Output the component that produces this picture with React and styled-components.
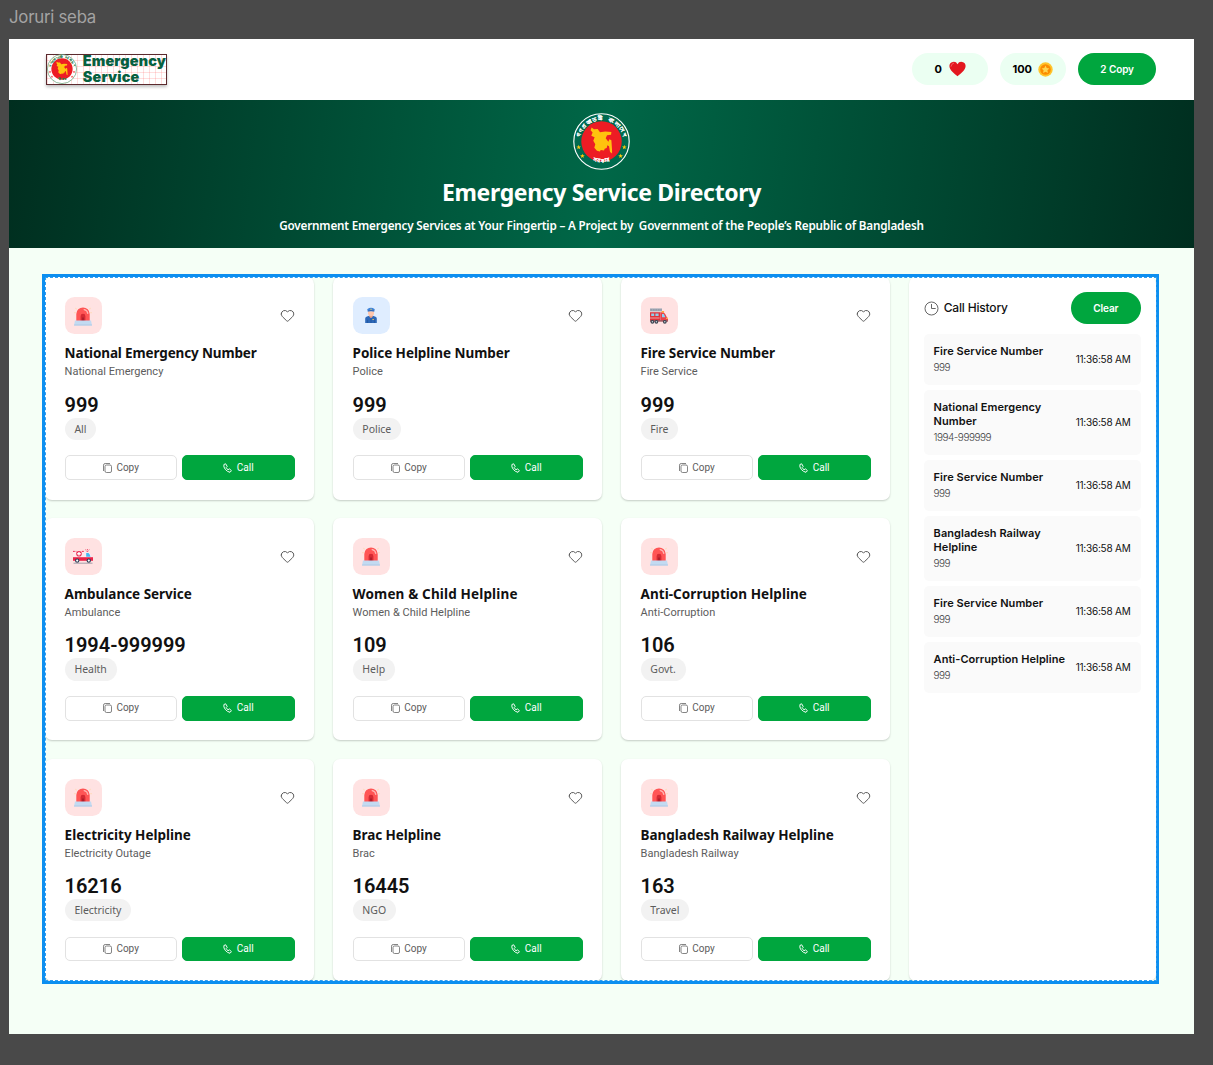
import React from "react";
import styled, { createGlobalStyle } from "styled-components";
import { Heart } from "lucide-react";

const hind = '"Noto Sans", "Open Sans", sans-serif';
const inter = "Inter, sans-serif";
const green = "#00a63e";

const GlobalStyle = createGlobalStyle`
  *, *::before, *::after { box-sizing: border-box; }
  body { margin: 0; background: #494949; font-family: Roboto, sans-serif; color: #111; overflow: hidden; }
  h1, h2, p { margin: 0; }
  svg { display: block; flex: none; overflow: visible; }
  button { font: inherit; cursor: pointer; }
`;

const Canvas = styled.div`
  height: 1065px;
  padding: 5.6px 19px 31px 9px;
  display: flex;
  flex-direction: column;
  background: #494949;
`;

const FrameLabel = styled.div`
  height: 33px;
  padding: 1.4px 0 0 0;
  flex: none;
  font: 400 16.8px/20px ${inter};
  letter-spacing: -0.25px;
  color: #a3a3a3;
`;

const Frame = styled.div`
  flex: 1;
  display: flex;
  flex-direction: column;
  background: #f5fff6;
`;

const Header = styled.header`
  height: 61.4px;
  flex: none;
  padding: 0 37.6px 0 36.8px;
  display: flex;
  align-items: center;
  justify-content: space-between;
  background: #fff;
`;

const Logo = styled.div`
  width: 121.2px;
  height: 31px;
  display: flex;
  align-items: center;
  gap: 6px;
  border: 1px solid #5b2a2e;
  box-shadow: 0 2px 3px rgba(0, 0, 0, 0.25);
  background:
    repeating-linear-gradient(90deg, rgba(255, 90, 90, 0.2) 0 1px, transparent 1px 6px),
    repeating-linear-gradient(180deg, transparent 0 5px, rgba(255, 90, 90, 0.2) 5px 6px),
    #fff;
`;

const LogoText = styled.div`
  font: 900 14.4px/16px ${inter};
  letter-spacing: 0.15px;
  color: #07603f;
`;

const HeaderActions = styled.div`
  display: flex;
  gap: 12.2px;
`;

const Counter = styled.div`
  width: ${(p) => p.$width}px;
  height: 32px;
  border-radius: 16px;
  display: flex;
  align-items: center;
  justify-content: center;
  gap: 6.5px;
  background: #ebfff2;
  font: 700 11px/1 ${inter};
  color: #000;
`;

const PillButton = styled.button`
  width: ${(p) => p.$width}px;
  height: 32.2px;
  padding: 0;
  border: 0;
  border-radius: 17px;
  background: ${green};
  color: #fff;
  font: 600 10px/1 ${inter};
  letter-spacing: -0.1px;
`;

const Hero = styled.section`
  height: 147.6px;
  flex: none;
  padding-top: 13px;
  display: flex;
  flex-direction: column;
  align-items: center;
  color: #fff;
  background: linear-gradient(97deg, #002e1f 0%, #006747 50%, #002e1f 100%);
`;

const HeroTitle = styled.h1`
  margin-top: 7.3px;
  font: 700 23px/30px ${hind};
  letter-spacing: -0.35px;
`;

const HeroText = styled.p`
  margin-top: 8.6px;
  font: 600 11.7px/18px ${hind};
  letter-spacing: -0.185px;
  white-space: pre;
`;

const Main = styled.main`
  padding: 29.9px 38px 0 36px;
`;

const Selection = styled.div`
  position: relative;
  display: grid;
  grid-template-columns: 845.3px 247px;
  gap: 18.6px;
  height: 703.5px;
  outline: 3px solid #0c8ff0;

  &::after {
    content: "";
    position: absolute;
    inset: -0.5px;
    border: 1px dashed #2f9df2;
    pointer-events: none;
  }
`;

const Cards = styled.div`
  display: grid;
  grid-template-columns: repeat(3, 1fr);
  grid-template-rows: repeat(3, 1fr);
  gap: 18.6px;
`;

const Card = styled.article`
  padding: 19.7px 19.6px;
  display: flex;
  flex-direction: column;
  border-radius: 7px;
  background: #fff;
  box-shadow: 0 1px 2px rgba(0, 0, 0, 0.2);
`;

const CardTop = styled.div`
  display: flex;
  align-items: center;
  justify-content: space-between;
`;

const IconTile = styled.div`
  width: 37px;
  height: 37px;
  border-radius: 9.5px;
  display: grid;
  place-items: center;
  background: ${(p) => (p.$blue ? "#dfedff" : "#ffe2e2")};
`;

const FavButton = styled.button`
  padding: 0;
  border: 0;
  background: none;
  color: #4f4f4f;
`;

const CardTitle = styled.h2`
  margin-top: 10px;
  font: 700 13.5px/19px ${hind};
  letter-spacing: ${(p) => p.$tracking}px;
  white-space: nowrap;
  color: #111;
`;

const CardSubtitle = styled.p`
  font: 400 11px/17px Roboto, sans-serif;
  letter-spacing: 0.03px;
  color: #5c5c5c;
`;

const CardNumber = styled.p`
  margin-top: 12.6px;
  font: 600 20px/24px Roboto, sans-serif;
  letter-spacing: -0.04px;
  color: #111;
`;

const Tag = styled.span`
  align-self: flex-start;
  margin-top: 0.8px;
  padding: 0 9.8px;
  border-radius: 12px;
  background: #f2f2f2;
  font: 400 10.5px/22.4px ${hind};
  letter-spacing: -0.03px;
  color: #5c5c5c;
`;

const CardActions = styled.div`
  margin-top: auto;
  display: grid;
  grid-template-columns: 1fr 1fr;
  gap: 5px;
`;

const ActionButton = styled.button`
  height: 24.7px;
  padding: 0;
  display: flex;
  align-items: center;
  justify-content: center;
  gap: 4.5px;
  border: 1px solid ${(p) => (p.$primary ? green : "#e2e2e2")};
  border-radius: 5px;
  background: ${(p) => (p.$primary ? green : "#fff")};
  color: ${(p) => (p.$primary ? "#fff" : "#5c5c5c")};
  font: 400 10px/1 Roboto, sans-serif;
`;

const History = styled.aside`
  padding: 14.8px;
  background: #fff;
  border-radius: 7px;
  box-shadow: 0 1px 2px rgba(0, 0, 0, 0.14);
`;

const HistoryHead = styled.div`
  display: flex;
  align-items: center;
  justify-content: space-between;
  margin-bottom: 9.8px;
`;

const HistoryTitle = styled.div`
  display: flex;
  align-items: center;
  gap: 5px;
  font: 500 12px/16px ${inter};
  letter-spacing: -0.18px;
`;

const HistoryList = styled.div`
  display: flex;
  flex-direction: column;
  gap: 5.2px;
`;

const HistoryItem = styled.div`
  min-height: 50.8px;
  padding: 9.9px;
  display: flex;
  align-items: center;
  justify-content: space-between;
  border-radius: 5px;
  background: #fafafa;
`;

const HistoryName = styled.div`
  max-width: 134px;
  font: 600 11px/14px ${inter};
  letter-spacing: 0.05px;
  color: #111;
`;

const HistoryNumber = styled.div`
  margin: 2.2px 0 0.8px;
  font: 300 10px/14px ${inter};
  letter-spacing: -0.5px;
  color: #444;
`;

const HistoryTime = styled.div`
  flex: none;
  margin: -1px 0.7px 0 0;
  font: 400 10px/14px ${inter};
  letter-spacing: -0.22px;
  color: #111;
`;

function Emblem({ id, size, light }) {
  const ink = light ? "#2f7d46" : "#fff";
  const star = light ? "#ef2b2d" : "#ffc90e";
  return (
    <svg width={size} height={size} viewBox="0 0 100 100">
      <defs>
        <path id={`${id}-top`} d="M12.5 55 A37.8 37.8 0 1 1 87.5 55" />
        <path id={`${id}-bottom`} d="M20 75 A43 43 0 0 0 80 75" />
      </defs>
      <circle cx="50" cy="50" r="48.6" fill={light ? "#fff" : "#006a4e"} stroke={ink} strokeWidth={light ? 1.8 : 2} />
      <circle cx="50" cy="50" r="35.5" fill="#ed1c24" />
      <g fill={ink} stroke={ink} strokeWidth="0.15" fontFamily="sans-serif" fontSize="9.4" fontWeight="600" wordSpacing="2">
        <text>
          <textPath href={`#${id}-top`} startOffset="50%" textAnchor="middle" textLength="102">
            গণপ্রজাতন্ত্রী বাংলাদেশ
          </textPath>
        </text>
        <text>
          <textPath href={`#${id}-bottom`} startOffset="50%" textAnchor="middle" textLength="30">
            সরকার
          </textPath>
        </text>
      </g>
      {[[10, 60], [16.5, 75.5], [90, 60], [83.5, 75.5]].map(([x, y]) => (
        <path
          key={`${x}-${y}`}
          transform={`translate(${x} ${y})`}
          fill={star}
          d="M0-4.2 1.1-1.3 4.1-1.2 1.7.6 2.5 3.5 0 1.8-2.5 3.5-1.7.6-4.1-1.2-1.1-1.3Z"
        />
      ))}
      <path
        transform="translate(50 50) scale(.588) translate(-184.5 -124.5)"
        fill="#ffc20e"
        d="M155 83 162 88 173 87 180 97 196 95 214 96 213 104 201 106 197 115 205 125 208 118 214 121 216 150 216 160 210 156 207 139 202 136 200 144 194 146 192 151 182 150 180 154 171 152 163 143 166 133 160 122 164 112 154 107 158 98 152 91Z"
      />
    </svg>
  );
}

const Siren = () => (
  <svg width="20" height="20" viewBox="0 0 20 20">
    <path d="M3.8 3.2 2.2 2M16.2 3.2 17.8 2M2.9 6.6H1M17.1 6.6H19" stroke="#ffdcc4" strokeWidth="1.2" />
    <path d="M3.3 15.2V8.1a6.7 6.7 0 0 1 13.4 0v7.1Z" fill="#ff5555" />
    <path d="M7.6 15.2v-5a2.4 2.4 0 0 1 4.8 0v5Z" fill="#d42a33" />
    <path d="M9.2 15.2v-3.8h1.6v3.8Z" fill="#a81d2b" />
    <path d="M11.2 3.6c2 .4 3.3 1.8 3.6 3.8" fill="none" stroke="#ffb8b4" strokeWidth="1.3" strokeLinecap="round" />
    <path d="M2 14.4h16l1 5H1Z" fill="#c3daf1" />
    <path d="M1 18.6h18v.8H1Z" fill="#aac6e4" />
  </svg>
);

const Officer = () => (
  <svg width="14" height="17" viewBox="0 0 14 17">
    <path d="M1.2 16V11.4q0-1.7 1.8-2l2.2-.6h3.6l2.2.6q1.8.3 1.8 2V16Z" fill="#2d68b8" />
    <path d="M5.2 7.4h3.6v2.2L7 11.2 5.2 9.6Z" fill="#e9a58c" />
    <path d="M4 4.2h6v2q0 2.7-3 2.7T4 6.2Z" fill="#ffc6ad" />
    <path d="M3.2 2.2Q7-.5 10.8 2.2L10.2 4.2H3.8Z" fill="#3f83d8" />
    <path d="M3.7 3.8q3.3-1 6.6 0v.7q-3.3-.8-6.6 0Z" fill="#2c5da6" />
    <path d="M6.6 1.8h.9v1.1h-.9Z" fill="#ffd24a" />
    <path d="M7 11.2V16M3.6 12.7V16M10.4 12.7V16" stroke="#1e4d94" strokeWidth=".6" />
    <path d="M8.5 12h1.3v1H8.5Z" fill="#ffd24a" />
  </svg>
);

const FireTruck = () => (
  <svg width="20" height="18" viewBox="0 0 20 18">
    <path d="M1 1.4h12v3H1Z" fill="#a3abb8" />
    <path d="M1.5 2.9h11" stroke="#7d8797" strokeWidth=".7" strokeDasharray="1.6 .9" />
    <path d="M1 5.2h10.4v9H1Z" fill="#df333b" />
    <path d="M11.4 5.2h3.2q1.8 1.4 3.4 5.2l1 .6v3.2h-7.6Z" fill="#e8434a" />
    <path d="M12.7 4h2.4v1.5h-2.4Z" fill="#ffac33" />
    <path d="M13 7h1.8l1.5 3.2H13Z" fill="#86d3f5" />
    <path d="M2.2 6.5h3v2.6h-3ZM6.4 6.5h3.2v2.6H6.4Z" fill="#8fcdea" />
    <path d="M1 10.6h9.6v.8H1Z" fill="#f6b8bb" />
    <path d="M1 13.2h18v1.4H1Z" fill="#9a5a63" />
    <path d="M17.3 10.8h1.5v1.3h-1.5Z" fill="#ffd34d" />
    {[3.4, 7.4, 15.8].map((x) => (
      <g key={x}>
        <circle cx={x} cy="14.8" r="1.9" fill="#39424f" />
        <circle cx={x} cy="14.8" r=".8" fill="#c9d3dc" />
      </g>
    ))}
  </svg>
);

const Ambulance = () => (
  <svg width="22" height="18" viewBox="0 0 22 18">
    <path d="M1 4.2h12.3V12H1Z" fill="#ffe9ec" />
    <path d="M1 4.4h1.8M3.6 4.4h.8M9.8 4.4h2" stroke="#eb2d53" strokeWidth="1" />
    <path d="M13.2 5.6h3q2.6 1 3.2 4.2l1 .7V12h-7.2Z" fill="#f7eff6" />
    <path d="M14.2 6.1h2.3q1.4 1 2 3.7h-4.3Z" fill="#45b9f2" />
    <path d="M14.6 4.4h1.6M15.4 2v1.2M13.4 2.7l.8.6M17.4 2.7l-.8.6" stroke="#eb2d53" strokeWidth=".8" />
    <path d="M1 10.2h20v3.6H1Z" fill="#eb2348" />
    <circle cx="7" cy="6.8" r="2.8" fill="#eb2d53" />
    <path d="M6.3 5h1.4v1.1h1.1v1.4H7.7v1.1H6.3V7.5H5.2V6.1h1.1Z" fill="#fff" />
    {[5.2, 16.8].map((x) => (
      <g key={x}>
        <circle cx={x} cy="13.6" r="2.2" fill="#2d4058" />
        <circle cx={x} cy="13.6" r="1.1" fill="#fff" />
      </g>
    ))}
    <path d="M1.5 16.2h19" stroke="#687184" strokeWidth=".6" />
  </svg>
);

const RedHeart = () => (
  <svg width="17" height="16" viewBox="0 0 17 16">
    <path d="M8.5 15.2C5.6 12.8.4 9.3.4 5A4.3 4.3 0 0 1 8.5 3.2 4.3 4.3 0 0 1 16.6 5c0 4.3-5.2 7.8-8.1 10.2Z" fill="#e3171f" />
    <path d="M2 5.3q.3-2.7 2.7-3.2" fill="none" stroke="#f56065" strokeWidth=".9" strokeLinecap="round" />
  </svg>
);

const Coin = () => (
  <svg width="15" height="15" viewBox="0 0 15 15">
    <circle cx="7.5" cy="7.5" r="7.2" fill="#ffc42b" />
    <circle cx="7.5" cy="7.5" r="5.3" fill="#fb8c00" />
    <path d="M7.5 3.6 8.7 6l2.7.4-2 1.9.5 2.7-2.4-1.3L5.1 11l.5-2.7-2-1.9L6.3 6Z" fill="#ffd54f" />
  </svg>
);

const Clock = () => (
  <svg width="15" height="15" viewBox="0 0 15 15" fill="none" stroke="#555" strokeWidth=".9">
    <circle cx="7.5" cy="7.5" r="6.5" />
    <path d="M7.5 3v4.5h4.2" />
  </svg>
);

const CopyIcon = () => (
  <svg width="9" height="10" viewBox="0 0 9 10" fill="none" stroke="currentColor" strokeWidth=".75">
    <rect x="2" y="2" width="6.5" height="7.5" rx="1.5" />
    <path d="M.5 7.6V2.2Q.5.5 2.2.5h4.4" strokeLinecap="round" />
  </svg>
);

const PhoneIcon = () => (
  <svg width="9" height="10" viewBox="0 0 9 10" fill="none" stroke="currentColor" strokeWidth=".95" strokeLinejoin="round">
    <path d="M2.7.8.9 1.5Q.3 4 2.3 6.4T7 9.3l1.4-1.7-1.9-1.7-1.5.8Q3.6 5.8 3.2 4.5l1-1Z" />
  </svg>
);

const tileIcons = { siren: Siren, officer: Officer, truck: FireTruck, ambulance: Ambulance };

const services = [
  { icon: "siren", name: "National Emergency Number", tracking: -0.14, sub: "National Emergency", number: "999", tag: "All" },
  { icon: "officer", name: "Police Helpline Number", tracking: -0.05, sub: "Police", number: "999", tag: "Police" },
  { icon: "truck", name: "Fire Service Number", tracking: -0.09, sub: "Fire Service", number: "999", tag: "Fire" },
  { icon: "ambulance", name: "Ambulance Service", tracking: -0.02, sub: "Ambulance", number: "1994-999999", tag: "Health" },
  { icon: "siren", name: "Women & Child Helpline", tracking: 0.15, sub: "Women & Child Helpline", number: "109", tag: "Help" },
  { icon: "siren", name: "Anti-Corruption Helpline", tracking: 0.05, sub: "Anti-Corruption", number: "106", tag: "Govt." },
  { icon: "siren", name: "Electricity Helpline", tracking: -0.01, sub: "Electricity Outage", number: "16216", tag: "Electricity" },
  { icon: "siren", name: "Brac Helpline", tracking: -0.06, sub: "Brac", number: "16445", tag: "NGO" },
  { icon: "siren", name: "Bangladesh Railway Helpline", tracking: -0.02, sub: "Bangladesh Railway", number: "163", tag: "Travel" },
];

const calls = [
  ["Fire Service Number", "999"],
  ["National Emergency Number", "1994-999999"],
  ["Fire Service Number", "999"],
  ["Bangladesh Railway Helpline", "999"],
  ["Fire Service Number", "999"],
  ["Anti-Corruption Helpline", "999"],
];

function ServiceCard({ icon, name, tracking, sub, number, tag }) {
  const TileIcon = tileIcons[icon];
  return (
    <Card>
      <CardTop>
        <IconTile $blue={icon === "officer"}>
          <TileIcon />
        </IconTile>
        <FavButton aria-label="Favourite">
          <Heart size={15} strokeWidth={1.5} />
        </FavButton>
      </CardTop>
      <CardTitle $tracking={tracking}>{name}</CardTitle>
      <CardSubtitle>{sub}</CardSubtitle>
      <CardNumber>{number}</CardNumber>
      <Tag>{tag}</Tag>
      <CardActions>
        <ActionButton>
          <CopyIcon />
          Copy
        </ActionButton>
        <ActionButton $primary>
          <PhoneIcon />
          Call
        </ActionButton>
      </CardActions>
    </Card>
  );
}

export default function App() {
  return (
    <Canvas>
      <GlobalStyle />
      <FrameLabel>Joruri seba</FrameLabel>
      <Frame>
        <Header>
          <Logo>
            <Emblem id="logo" size={30} light />
            <LogoText>
              Emergency
              <br />
              Service
            </LogoText>
          </Logo>
          <HeaderActions>
            <Counter $width={76}>
              0 <RedHeart />
            </Counter>
            <Counter $width={65.4}>
              100 <Coin />
            </Counter>
            <PillButton $width={78.6}>2 Copy</PillButton>
          </HeaderActions>
        </Header>
        <Hero>
          <Emblem id="hero" size={57} />
          <HeroTitle>Emergency Service Directory</HeroTitle>
          <HeroText>
            {"Government Emergency Services at Your Fingertip – A Project by  Government of the People’s Republic of Bangladesh"}
          </HeroText>
        </Hero>
        <Main>
          <Selection>
            <Cards>
              {services.map((s) => (
                <ServiceCard key={s.name} {...s} />
              ))}
            </Cards>
            <History>
              <HistoryHead>
                <HistoryTitle>
                  <Clock />
                  Call History
                </HistoryTitle>
                <PillButton $width={70.4}>Clear</PillButton>
              </HistoryHead>
              <HistoryList>
                {calls.map(([name, number], i) => (
                  <HistoryItem key={i}>
                    <div>
                      <HistoryName>{name}</HistoryName>
                      <HistoryNumber>{number}</HistoryNumber>
                    </div>
                    <HistoryTime>11:36:58 AM</HistoryTime>
                  </HistoryItem>
                ))}
              </HistoryList>
            </History>
          </Selection>
        </Main>
      </Frame>
    </Canvas>
  );
}
